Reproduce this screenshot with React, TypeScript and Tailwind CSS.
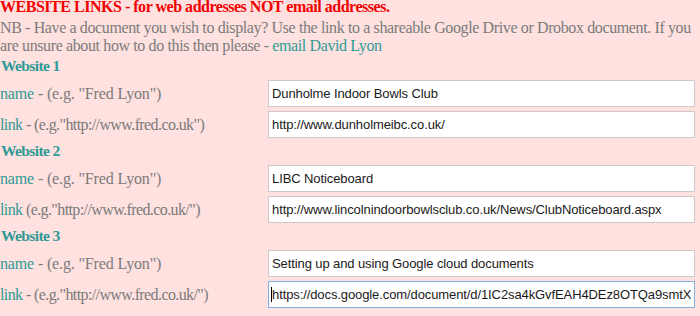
import React from "react";

const teal = "text-[#2f9a96]";
const gray = "text-[#7b7b7b]";

function Row({ label, rest, value, focused, tight }: { label: string; rest: string; value: string; focused?: boolean; tight?: boolean }) {
  return (
    <div className="flex items-center h-[27px]">
      <div className={`w-[268px] text-[16px] leading-[18px] whitespace-nowrap ${tight ? "tracking-[-0.6px]" : "tracking-[-0.15px]"}`}>
        <span className={teal}>{label}</span>
        <span className={gray}>{rest}</span>
      </div>
      <div className="relative w-[427px] h-[27px]">
        <input
          readOnly
          value={value}
          className={`w-full h-full bg-white px-[3px] text-[13px] tracking-[-0.1px] text-[#1a1a1a] outline-none border ${focused ? "border-[#7fb1e3]" : "border-[#cfc8c8]"}`}
          style={{ fontFamily: "'Liberation Sans', Arial, sans-serif" }}
        />
        {focused && <span className="absolute left-[3px] top-[6px] w-px h-[15px] bg-black" />}
      </div>
    </div>
  );
}

function Section({ n, name, link, linkRest, focused }: { n: number; name: string; link: string; linkRest: string; focused?: boolean }) {
  return (
    <div className="flex flex-col h-[85px]">
      <div className={`font-bold text-[15.5px] leading-[18px] tracking-[-0.6px] ${teal} pl-[1px]`}>Website {n}</div>
      <div className="mt-[5px] flex flex-col gap-[4px]">
        <Row label="name" rest={' - (e.g. "Fred Lyon")'} value={name} />
        <Row label="link" rest={linkRest} value={link} focused={focused} tight />
      </div>
    </div>
  );
}

export default function App() {
  return (
    <div
      className="w-[700px] h-[316px] overflow-hidden bg-[#ffe1df] pr-[5px]"
      style={{ fontFamily: "'Liberation Serif', 'Times New Roman', serif" }}
    >
      <div className="text-[16px] leading-[14px] tracking-[-0.48px] font-bold text-[#f20000] whitespace-nowrap">
        WEBSITE LINKS - for web addresses NOT email addresses.
      </div>
      <div className={`mt-[5px] text-[16px] leading-[18px] tracking-[-0.38px] ${gray}`}>
        NB - Have a document you wish to display? Use the link to a shareable Google Drive or Drobox document. If you are unsure about how to do this then please - <span className={teal}>email David Lyon</span>
      </div>
      <div className="mt-[2px]">
        <Section n={1} name="Dunholme Indoor Bowls Club" link="http://www.dunholmeibc.co.uk/" linkRest={' - (e.g."http://www.fred.co.uk")'} />
        <Section n={2} name="LIBC Noticeboard" link="http://www.lincolnindoorbowlsclub.co.uk/News/ClubNoticeboard.aspx" linkRest={' (e.g."http://www.fred.co.uk/")'} />
        <Section n={3} name="Setting up and using Google cloud documents" link="https://docs.google.com/document/d/1IC2sa4kGvfEAH4DEz8OTQa9smtXW" linkRest={' - (e.g."http://www.fred.co.uk/")'} focused />
      </div>
    </div>
  );
}
